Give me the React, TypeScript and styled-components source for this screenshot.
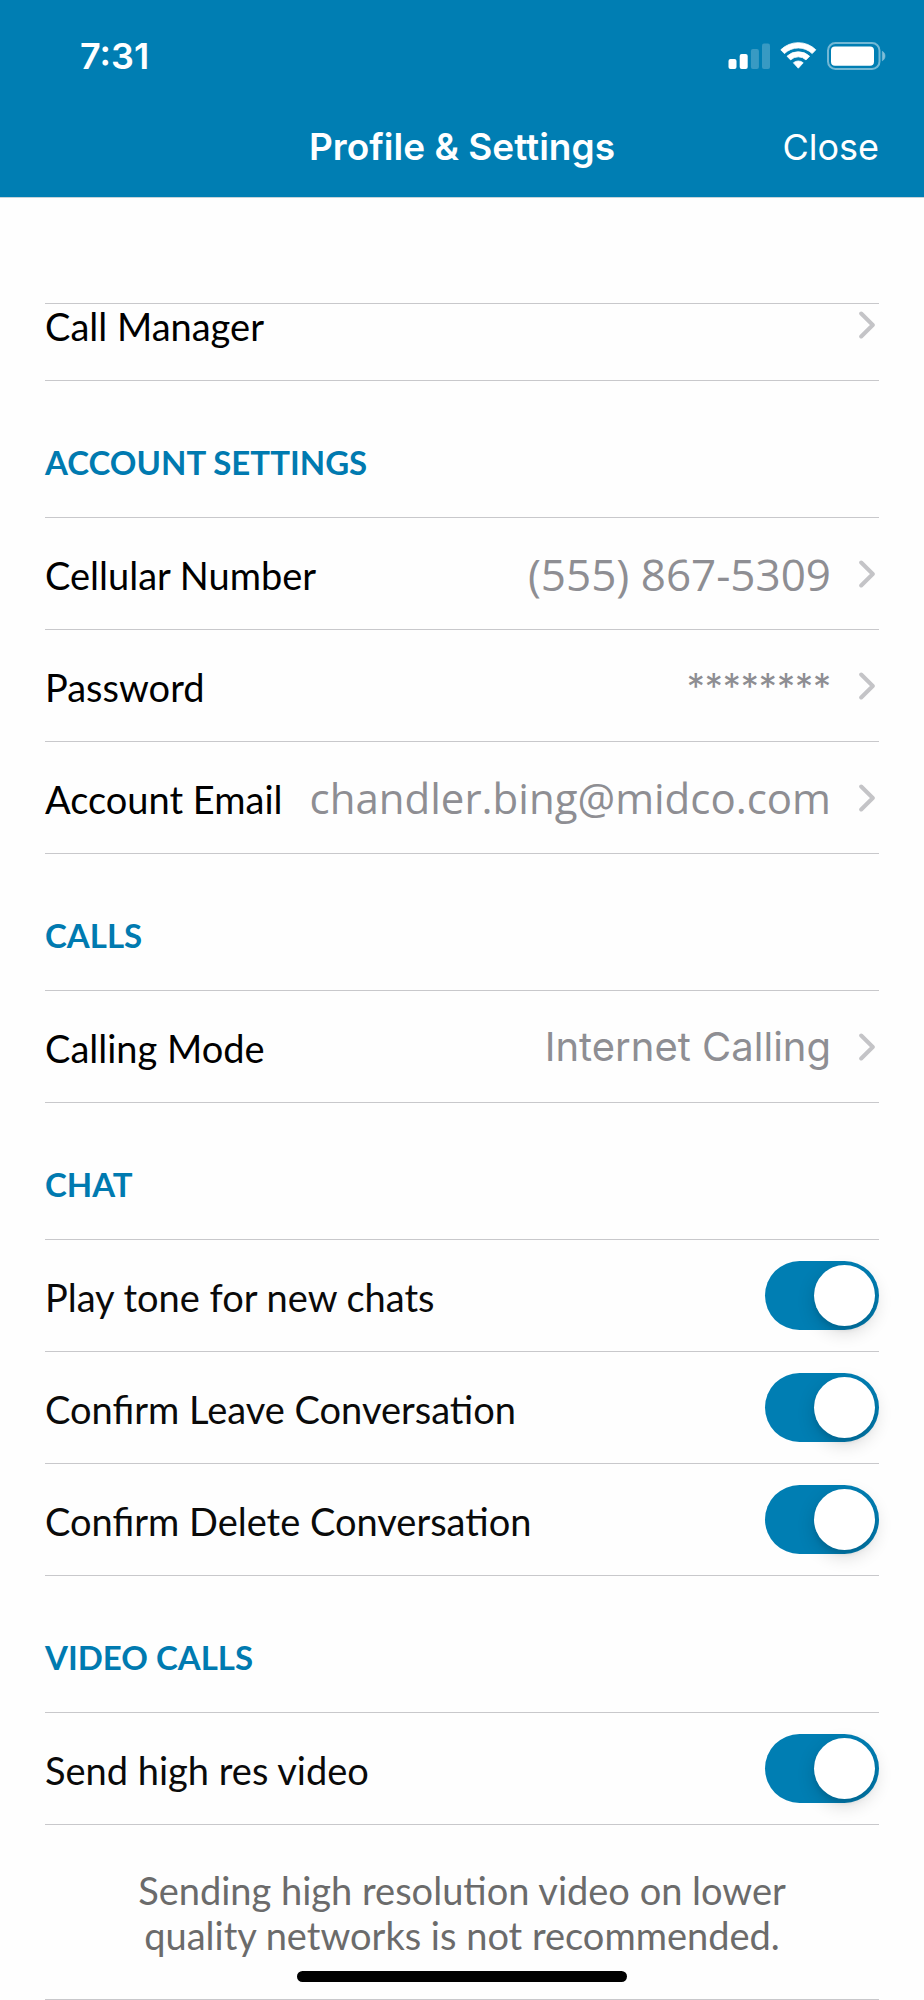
import React, { useState } from "react";
import styled, { createGlobalStyle } from "styled-components";

const GlobalStyle = createGlobalStyle`
  *, *::before, *::after { box-sizing: border-box; }
  body { margin: 0; background: #fefefe; }
`;

const systemFont = `Inter, "Liberation Sans", sans-serif`;
const labelFont = `Lato, "Open Sans", sans-serif`;
const valueFonts = {
  humanist: `"Open Sans", "Noto Sans", sans-serif`,
  system: systemFont,
};

const Screen = styled.div`
  min-height: 100vh;
  font-family: ${labelFont};
  color: #0a0a0a;
`;

const Header = styled.header`
  padding-bottom: 15px;
  background: #007eb3;
  border-bottom: 1px solid #c4d3da;
  color: #fff;
  font-family: ${systemFont};
`;

const StatusBar = styled.div`
  display: flex;
  align-items: center;
  justify-content: space-between;
  height: 112px;
  padding: 0 38px 0 80px;
`;

const Clock = styled.time`
  font-size: 36px;
  font-weight: 600;
  line-height: 44px;
`;

const NavBar = styled.div`
  display: grid;
  grid-template-columns: 1fr auto 1fr;
  align-items: center;
  height: 70px;
  padding: 0 45px;
`;

const Title = styled.h1`
  grid-column: 2;
  margin: 0;
  font-size: 37px;
  font-weight: 600;
  line-height: 44px;
`;

const CloseButton = styled.button`
  justify-self: end;
  padding: 0;
  border: 0;
  background: none;
  color: inherit;
  font-family: inherit;
  font-size: 36px;
  font-weight: 400;
  line-height: 44px;
  cursor: pointer;
`;

const Content = styled.main`
  padding: 105px 45px 0;
`;

const Heading = styled.h2`
  display: flex;
  align-items: flex-end;
  height: 136px;
  margin: 0;
  padding-bottom: 33px;
  color: #007ab0;
  font-size: 33px;
  font-weight: 700;
  line-height: 44px;
`;

const List = styled.ul`
  margin: 0;
  padding: 0;
  list-style: none;
  border-top: 1px solid #c8c8cb;
`;

const Item = styled.li<{ $clipped?: boolean }>`
  display: flex;
  align-items: flex-end;
  height: ${(p) => (p.$clipped ? 77 : 112)}px;
  overflow: ${(p) => (p.$clipped ? "hidden" : "visible")};
  border-bottom: 1px solid #c8c8cb;
`;

const RowButton = styled.button`
  display: flex;
  align-items: center;
  width: 100%;
  height: 111px;
  padding: 0 4px 0 0;
  border: 0;
  background: none;
  color: #000;
  font-family: inherit;
  text-align: left;
  cursor: pointer;
`;

const RowLabel = styled.label`
  display: flex;
  align-items: center;
  justify-content: space-between;
  width: 100%;
  height: 111px;
  cursor: pointer;
`;

const RowText = styled.span`
  padding-top: 2px;
  font-size: 38px;
  line-height: 46px;
  white-space: nowrap;
`;

const Value = styled.span<{ $font: keyof typeof valueFonts; $size: number }>`
  margin-left: auto;
  color: #8e8e93;
  font-family: ${(p) => valueFonts[p.$font]};
  font-size: ${(p) => p.$size}px;
  line-height: 56px;
  white-space: nowrap;
`;

const Chevron = styled.svg`
  flex: none;
  width: 16px;
  height: 28px;
  margin-left: auto;

  ${Value} + & {
    margin-left: 28px;
  }
`;

const Switch = styled.input`
  appearance: none;
  display: flex;
  flex: none;
  align-items: center;
  width: 114px;
  height: 69px;
  margin: 0;
  padding: 4px;
  border-radius: 35px;
  background: #c8c8cb;
  cursor: pointer;

  &::before {
    content: "";
    width: 61px;
    height: 61px;
    border-radius: 50%;
    background: #fff;
    box-shadow: 0 6px 18px rgba(0, 0, 0, 0.16), 0 4px 4px rgba(0, 0, 0, 0.08);
  }

  &:checked {
    justify-content: flex-end;
    background: #007eb3;
  }
`;

const Note = styled.p`
  margin: 0;
  padding: 43px 60px 41px;
  border-bottom: 1px solid #c8c8cb;
  color: #6b6b6b;
  font-size: 38px;
  line-height: 45px;
  text-align: center;
`;

const HomeIndicator = styled.div`
  position: fixed;
  bottom: 18px;
  left: 50%;
  width: 330px;
  height: 11px;
  margin-left: -165px;
  border-radius: 6px;
  background: #000;
`;

function StatusIcons() {
  return (
    <svg width="158" height="28" viewBox="0 0 158 28" fill="#fff" role="img" aria-label="Signal, Wi-Fi and battery">
      <rect x="0.5" y="17" width="8" height="10" rx="2" />
      <rect x="11.7" y="12" width="8" height="15" rx="2" />
      <rect x="22.9" y="7" width="8" height="20" rx="2" opacity="0.22" />
      <rect x="34" y="1.5" width="8" height="25.5" rx="2" opacity="0.22" />
      <path d="M52.8 7.8 A25 25 0 0 1 87.8 7.8 L84.2 11.6 A20 20 0 0 0 56.4 11.6 Z" strokeLinejoin="round" stroke="#fff" strokeWidth="0.8" />
      <path d="M59 14.2 A16.5 16.5 0 0 1 81.6 14.2 L78 17.9 A11.2 11.2 0 0 0 62.6 17.9 Z" strokeLinejoin="round" stroke="#fff" strokeWidth="0.8" />
      <path d="M65.4 20.8 A7.5 7.5 0 0 1 75.2 20.8 L70.3 26.2 Z" strokeLinejoin="round" stroke="#fff" strokeWidth="0.8" />
      <rect x="100" y="1" width="51.5" height="26" rx="7.5" fill="none" stroke="#fff" strokeWidth="2" opacity="0.45" />
      <rect x="103" y="4.5" width="43" height="19.2" rx="4" />
      <path d="M154.3 9.3 A5.5 5.5 0 0 1 154.3 18.8 Z" opacity="0.5" stroke="#fff" strokeWidth="0.6" />
    </svg>
  );
}

type LinkRowProps = {
  label: string;
  value?: string;
  font?: keyof typeof valueFonts;
  size?: number;
  clipped?: boolean;
};

function LinkRow({ label, value, font = "humanist", size = 44, clipped }: LinkRowProps) {
  return (
    <Item $clipped={clipped}>
      <RowButton type="button">
        <RowText>{label}</RowText>
        {value && <Value $font={font} $size={size}>{value}</Value>}
        <Chevron viewBox="0 0 16 28" fill="none" stroke="#c4c4c7" strokeWidth="4" strokeLinecap="round" strokeLinejoin="round" aria-hidden="true">
          <path d="M2.2 2.5 L13.8 14 L2.2 25.5" />
        </Chevron>
      </RowButton>
    </Item>
  );
}

function SwitchRow({ label }: { label: string }) {
  const [on, setOn] = useState(true);
  return (
    <Item>
      <RowLabel>
        <RowText>{label}</RowText>
        <Switch type="checkbox" role="switch" checked={on} onChange={(e) => setOn(e.target.checked)} />
      </RowLabel>
    </Item>
  );
}

export default function App() {
  return (
    <Screen>
      <GlobalStyle />
      <Header>
        <StatusBar>
          <Clock>7:31</Clock>
          <StatusIcons />
        </StatusBar>
        <NavBar>
          <Title>Profile &amp; Settings</Title>
          <CloseButton type="button">Close</CloseButton>
        </NavBar>
      </Header>
      <Content>
        <List>
          <LinkRow label="Call Manager" clipped />
        </List>
        <section>
          <Heading>ACCOUNT SETTINGS</Heading>
          <List>
            <LinkRow label="Cellular Number" value="(555) 867-5309" />
            <LinkRow label="Password" value="********" font="system" size={36} />
            <LinkRow label="Account Email" value="chandler.bing@midco.com" size={42} />
          </List>
        </section>
        <section>
          <Heading>CALLS</Heading>
          <List>
            <LinkRow label="Calling Mode" value="Internet Calling" font="system" size={40} />
          </List>
        </section>
        <section>
          <Heading>CHAT</Heading>
          <List>
            <SwitchRow label="Play tone for new chats" />
            <SwitchRow label="Confirm Leave Conversation" />
            <SwitchRow label="Confirm Delete Conversation" />
          </List>
        </section>
        <section>
          <Heading>VIDEO CALLS</Heading>
          <List>
            <SwitchRow label="Send high res video" />
          </List>
          <Note>Sending high resolution video on lower quality networks is not recommended.</Note>
        </section>
      </Content>
      <HomeIndicator />
    </Screen>
  );
}
